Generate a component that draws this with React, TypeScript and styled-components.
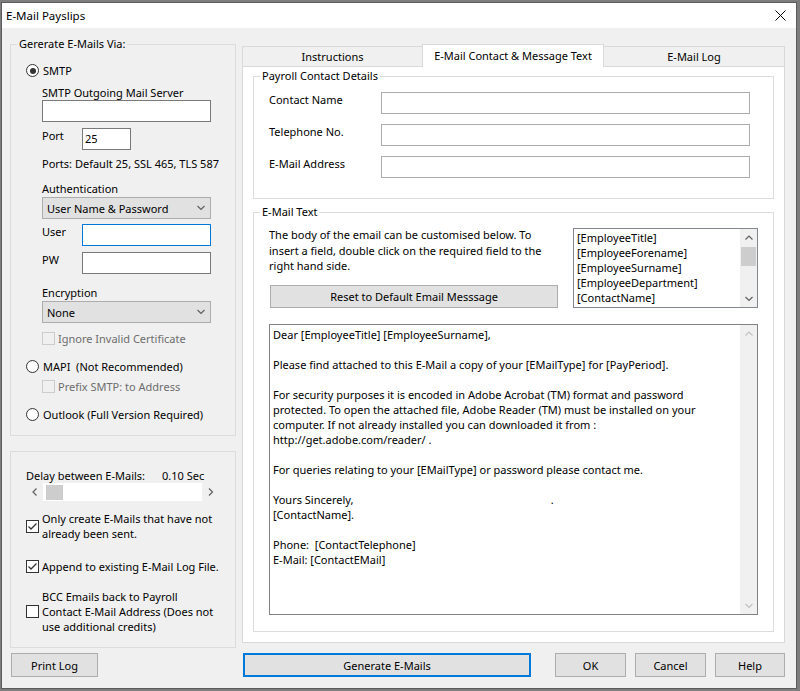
import React from 'react';
import styled, { createGlobalStyle, css } from 'styled-components';

const GlobalStyle = createGlobalStyle`
  *, *::before, *::after { box-sizing: border-box; }
  html, body { margin: 0; padding: 0; }
  body {
    background: #7d7d7d;
    font-family: 'Noto Sans', 'Segoe UI', sans-serif;
    font-size: 11px;
    color: #000;
  }
  #root { padding: 2px 0 0 1px; }
`;

const Window = styled.div`
  width: 796px;
  height: 687px;
  border: 1px solid #5c5c5c;
  background: #f0f0f0;
  display: flex;
  flex-direction: column;
`;

const TitleBar = styled.div`
  flex: none;
  height: 25px;
  background: #fff;
  display: flex;
  align-items: center;
  justify-content: space-between;
  padding: 0 10px 0 4px;
  font-size: 11.5px;
`;

const Client = styled.div`
  flex: 1;
  display: flex;
  flex-direction: column;
  padding: 0 11px 11px 8px;
`;

const MainRow = styled.div`
  height: 615px;
  display: flex;
  gap: 6px;
`;

const LeftCol = styled.div`
  width: 226px;
  display: flex;
  flex-direction: column;
  padding-top: 8px;
`;

const RightCol = styled.div`
  width: 543px;
  display: flex;
  flex-direction: column;
  padding-top: 16px;
`;

const Footer = styled.div`
  display: flex;
  padding-top: 10px;
`;

const Group = styled.fieldset<{ $grow?: boolean; $mt?: number; $pad?: string }>`
  margin: ${p => p.$mt ?? 0}px 0 0;
  min-width: 0;
  border: 1px solid #dcdcdc;
  padding: ${p => p.$pad ?? '0 15px 13px'};
  display: flex;
  flex-direction: column;
  ${p => p.$grow && 'flex: 1;'}
`;

const GroupTitle = styled.legend`
  padding: 0 2px;
  margin-left: -9px;
  height: 16px;
  line-height: 16px;
`;

const Text = styled.div<{ $mt?: number }>`
  margin-top: ${p => p.$mt ?? 0}px;
  line-height: 15px;
  height: 15px;
  white-space: nowrap;
`;

const Indent = styled.div`
  display: flex;
  flex-direction: column;
  padding-left: 16px;
`;

const TextBox = styled.div<{ $w: number; $focus?: boolean; $light?: boolean }>`
  width: ${p => p.$w}px;
  height: 22px;
  flex: none;
  background: #fff;
  border: 1px solid ${p => (p.$focus ? '#0078d7' : p.$light ? '#acacac' : '#7a7a7a')};
  padding: 0 2px;
  line-height: 20px;
`;

const InputRow = styled.div<{ $mt?: number; $label: number }>`
  margin-top: ${p => p.$mt ?? 0}px;
  display: grid;
  grid-template-columns: ${p => p.$label}px auto;
  align-items: start;
  line-height: 15px;
`;

const ComboBox = styled.div<{ $mt?: number }>`
  margin-top: ${p => p.$mt ?? 0}px;
  width: 169px;
  height: 22px;
  background: #e1e1e1;
  border: 1px solid #adadad;
  display: flex;
  align-items: center;
  justify-content: space-between;
  padding: 0 5px 0 4px;
`;

const OptionRow = styled.div<{ $mt?: number; $gap: number }>`
  margin-top: ${p => p.$mt ?? 0}px;
  display: flex;
  align-items: center;
  gap: ${p => p.$gap}px;
  line-height: 15px;
  white-space: pre;
`;

const DelayLabel = styled.span`
  width: 136px;
`;

const OptionText = styled.span<{ $disabled?: boolean }>`
  line-height: 15px;
  white-space: pre;
  color: ${p => (p.$disabled ? '#6d6d6d' : '#000')};
`;

const RadioMark = styled.span<{ $on?: boolean }>`
  flex: none;
  width: 13px;
  height: 13px;
  border-radius: 50%;
  border: 1px solid #333;
  background: #fff;
  display: flex;
  align-items: center;
  justify-content: center;
  &::after {
    content: '';
    width: 6px;
    height: 6px;
    border-radius: 50%;
    background: ${p => (p.$on ? '#333' : 'transparent')};
  }
`;

const CheckMark = styled.span<{ $disabled?: boolean }>`
  flex: none;
  width: 13px;
  height: 13px;
  border: 1px solid ${p => (p.$disabled ? '#cccccc' : '#333')};
  background: ${p => (p.$disabled ? 'transparent' : '#fff')};
  display: flex;
  align-items: center;
  justify-content: center;
`;

const HScroll = styled.div`
  width: 193px;
  height: 18px;
  display: flex;
  background: #f0f0f0;
`;

const ScrollArrow = styled.div`
  flex: none;
  width: 17px;
  height: 17px;
  display: flex;
  align-items: center;
  justify-content: center;
`;

const HTrack = styled.div`
  flex: 1;
  background: #fff;
  display: flex;
  align-items: center;
`;

const HThumb = styled.div`
  margin-left: 3px;
  width: 17px;
  height: 15px;
  background: #cdcdcd;
`;

const VScroll = styled.div`
  flex: none;
  width: 17px;
  background: #f0f0f0;
  display: flex;
  flex-direction: column;
`;

const VTrack = styled.div`
  flex: 1;
  display: flex;
  flex-direction: column;
`;

const VThumb = styled.div`
  margin: 1px 1px 0;
  height: 19px;
  background: #cdcdcd;
`;

const Button = styled.button<{ $w: number; $ml?: number; $h?: number; $primary?: boolean }>`
  width: ${p => p.$w}px;
  height: ${p => p.$h ?? 24}px;
  margin: 0 0 0 ${p => p.$ml ?? 0}px;
  padding: 0;
  background: #e1e1e1;
  border: 1px solid #adadad;
  font: inherit;
  color: #000;
  ${p =>
    p.$primary &&
    css`
      border: 2px solid #0078d7;
    `}
`;

const Tabs = styled.div`
  height: 22px;
  display: flex;
  align-items: flex-end;
`;

const Tab = styled.div<{ $w: number; $active?: boolean; $side: 'left' | 'right' | 'none' }>`
  width: ${p => p.$w}px;
  height: 20px;
  background: #f0f0f0;
  border: 1px solid #d9d9d9;
  border-bottom: none;
  ${p => p.$side === 'left' && 'border-left: none;'}
  ${p => p.$side === 'right' && 'border-right: none;'}
  display: flex;
  align-items: center;
  justify-content: center;
  white-space: nowrap;
  ${p =>
    p.$active &&
    css`
      position: relative;
      z-index: 1;
      height: 23px;
      margin-bottom: -1px;
      padding-bottom: 2px;
      background: #fff;
    `}
`;

const TabPanel = styled.div`
  flex: 1;
  display: flex;
  flex-direction: column;
  background: #fff;
  border: 1px solid #d9d9d9;
  padding: 1px 10px 10px;
`;

const ContactRows = styled.div`
  margin-top: 8px;
  display: flex;
  flex-direction: column;
  gap: 10px;
`;

const TopRow = styled.div`
  margin-top: 8px;
  height: 80px;
  display: flex;
  justify-content: space-between;
`;

const Intro = styled.div`
  width: 289px;
  display: flex;
  flex-direction: column;
  justify-content: space-between;
`;

const IntroText = styled.div`
  margin-top: -1px;
  line-height: 15.5px;
  white-space: nowrap;
`;

const ListBox = styled.div`
  width: 185px;
  height: 80px;
  border: 1px solid #828790;
  display: flex;
  background: #fff;
`;

const ListItems = styled.div`
  flex: 1;
  padding: 1px 0 0 3px;
  line-height: 15px;
  overflow: hidden;
  white-space: nowrap;
`;

const MessageBox = styled.div`
  margin-top: 16px;
  width: 489px;
  height: 291px;
  border: 1px solid #828282;
  display: flex;
  background: #fff;
`;

const MessageText = styled.div`
  flex: 1;
  padding: 2px 0 0 3px;
  line-height: 15px;
  white-space: pre;
  overflow: hidden;
`;

const Chevron = ({ dir, color = '#606060' }: { dir: 'up' | 'down' | 'left' | 'right'; color?: string }) => {
  const pts = {
    up: '0.5,4.5 4,1 7.5,4.5',
    down: '0.5,1 4,4.5 7.5,1',
    left: '4.5,0.5 1,4 4.5,7.5',
    right: '1,0.5 4.5,4 1,7.5',
  }[dir];
  const vertical = dir === 'up' || dir === 'down';
  return (
    <svg width={vertical ? 8 : 6} height={vertical ? 6 : 8}>
      <polyline points={pts} fill="none" stroke={color} strokeWidth="1.2" />
    </svg>
  );
};

const Tick = () => (
  <svg width="11" height="11" viewBox="0 0 11 11">
    <polyline points="1.5,5.5 4,8 9.5,2.5" fill="none" stroke="#333" strokeWidth="1.3" />
  </svg>
);

const Radio = ({ on, label, mt }: { on?: boolean; label: string; mt: number }) => (
  <OptionRow $mt={mt} $gap={4}>
    <RadioMark $on={on} />
    <OptionText>{label}</OptionText>
  </OptionRow>
);

const Check = ({
  checked,
  disabled,
  mt,
  children,
}: {
  checked?: boolean;
  disabled?: boolean;
  mt: number;
  children: React.ReactNode;
}) => (
  <OptionRow $mt={mt} $gap={3}>
    <CheckMark $disabled={disabled}>{checked && <Tick />}</CheckMark>
    <OptionText $disabled={disabled}>{children}</OptionText>
  </OptionRow>
);

const mergeFields = [
  '[EmployeeTitle]',
  '[EmployeeForename]',
  '[EmployeeSurname]',
  '[EmployeeDepartment]',
  '[ContactName]',
];

const message = [
  'Dear [EmployeeTitle] [EmployeeSurname],',
  '',
  'Please find attached to this E-Mail a copy of your [EMailType] for [PayPeriod].',
  '',
  'For security purposes it is encoded in Adobe Acrobat (TM) format and password',
  'protected. To open the attached file, Adobe Reader (TM) must be installed on your',
  'computer. If not already installed you can downloaded it from :',
  'http://get.adobe.com/reader/ .',
  '',
  'For queries relating to your [EMailType] or password please contact me.',
  '',
  'Yours Sincerely,' + ' '.repeat(69) + '.',
  '[ContactName].',
  '',
  'Phone:  [ContactTelephone]',
  'E-Mail: [ContactEMail]',
];

const App = () => (
  <>
    <GlobalStyle />
    <Window>
      <TitleBar>
        <span>E-Mail Payslips</span>
        <svg width="11" height="11" viewBox="0 0 11 11">
          <path d="M0.5 0.5 L10.5 10.5 M10.5 0.5 L0.5 10.5" stroke="#000" strokeWidth="1" />
        </svg>
      </TitleBar>
      <Client>
        <MainRow>
          <LeftCol>
            <Group>
              <GroupTitle>Gererate E-Mails Via:</GroupTitle>
              <Radio on label="SMTP" mt={11} />
              <Indent>
                <Text $mt={7}>SMTP Outgoing Mail Server</Text>
                <TextBox $w={169} />
                <InputRow $mt={6} $label={40}>
                  <span>Port</span>
                  <TextBox $w={49}>25</TextBox>
                </InputRow>
                <Text $mt={6}>Ports: Default 25, SSL 465, TLS 587</Text>
                <Text $mt={10}>Authentication</Text>
                <ComboBox $mt={1}>
                  <span>User Name &amp; Password</span>
                  <Chevron dir="down" />
                </ComboBox>
                <InputRow $mt={5} $label={40}>
                  <span>User</span>
                  <TextBox $w={129} $focus />
                </InputRow>
                <InputRow $mt={6} $label={40}>
                  <span>PW</span>
                  <TextBox $w={129} />
                </InputRow>
                <Text $mt={11}>Encryption</Text>
                <ComboBox $mt={1}>
                  <span>None</span>
                  <Chevron dir="down" />
                </ComboBox>
                <Check disabled mt={8}>Ignore Invalid Certificate</Check>
              </Indent>
              <Radio label="MAPI  (Not Recommended)" mt={13} />
              <Indent>
                <Check disabled mt={5}>Prefix SMTP: to Address</Check>
              </Indent>
              <Radio label="Outlook (Full Version Required)" mt={13} />
            </Group>

            <Group $grow $mt={15}>
              <OptionRow $mt={16} $gap={0}>
                <DelayLabel>Delay between E-Mails:</DelayLabel>
                <span>0.10 Sec</span>
              </OptionRow>
              <HScroll>
                <ScrollArrow>
                  <Chevron dir="left" />
                </ScrollArrow>
                <HTrack>
                  <HThumb />
                </HTrack>
                <ScrollArrow>
                  <Chevron dir="right" />
                </ScrollArrow>
              </HScroll>
              <Check checked mt={10}>
                {'Only create E-Mails that have not\nalready been sent.'}
              </Check>
              <Check checked mt={18}>Append to existing E-Mail Log File.</Check>
              <Check mt={15}>
                {'BCC Emails back to Payroll\nContact E-Mail Address (Does not\nuse additional credits)'}
              </Check>
            </Group>
          </LeftCol>

          <RightCol>
            <Tabs>
              <Tab $w={180} $side="right">Instructions</Tab>
              <Tab $w={182} $side="none" $active>E-Mail Contact &amp; Message Text</Tab>
              <Tab $w={181} $side="left">E-Mail Log</Tab>
            </Tabs>
            <TabPanel>
              <Group $pad="0 15px 20px">
                <GroupTitle>Payroll Contact Details</GroupTitle>
                <ContactRows>
                  <InputRow $label={112}>
                    <span>Contact Name</span>
                    <TextBox $w={369} $light />
                  </InputRow>
                  <InputRow $label={112}>
                    <span>Telephone No.</span>
                    <TextBox $w={369} $light />
                  </InputRow>
                  <InputRow $label={112}>
                    <span>E-Mail Address</span>
                    <TextBox $w={369} $light />
                  </InputRow>
                </ContactRows>
              </Group>

              <Group $grow $mt={5} $pad="0 15px">
                <GroupTitle>E-Mail Text</GroupTitle>
                <TopRow>
                  <Intro>
                    <IntroText>
                      The body of the email can be customised below. To
                      <br />
                      insert a field, double click on the required field to the
                      <br />
                      right hand side.
                    </IntroText>
                    <Button $w={288} $ml={1} $h={23}>Reset to Default Email Messsage</Button>
                  </Intro>
                  <ListBox>
                    <ListItems>
                      {mergeFields.map(f => (
                        <div key={f}>{f}</div>
                      ))}
                    </ListItems>
                    <VScroll>
                      <ScrollArrow>
                        <Chevron dir="up" />
                      </ScrollArrow>
                      <VTrack>
                        <VThumb />
                      </VTrack>
                      <ScrollArrow>
                        <Chevron dir="down" />
                      </ScrollArrow>
                    </VScroll>
                  </ListBox>
                </TopRow>
                <MessageBox>
                  <MessageText>
                    {message.map((line, i) => (
                      <div key={i}>{line || ' '}</div>
                    ))}
                  </MessageText>
                  <VScroll>
                    <ScrollArrow>
                      <Chevron dir="up" color="#c2c2c2" />
                    </ScrollArrow>
                    <VTrack />
                    <ScrollArrow>
                      <Chevron dir="down" color="#c2c2c2" />
                    </ScrollArrow>
                  </VScroll>
                </MessageBox>
              </Group>
            </TabPanel>
          </RightCol>
        </MainRow>

        <Footer>
          <Button $w={87} $ml={1}>Print Log</Button>
          <Button $w={288} $ml={145} $primary>Generate E-Mails</Button>
          <Button $w={71} $ml={24}>OK</Button>
          <Button $w={71} $ml={9}>Cancel</Button>
          <Button $w={70} $ml={9}>Help</Button>
        </Footer>
      </Client>
    </Window>
  </>
);

export default App;
